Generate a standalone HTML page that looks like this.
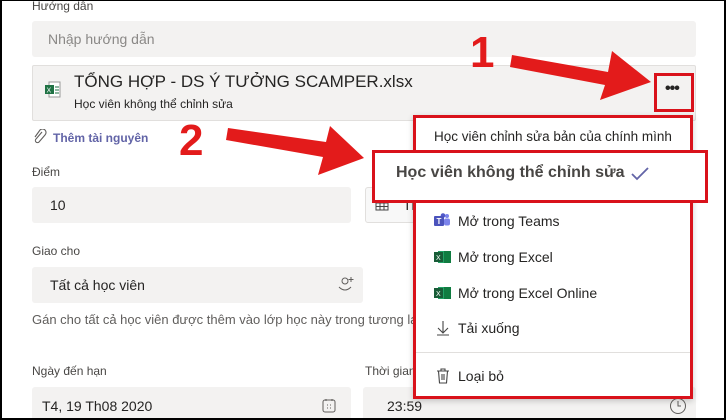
<!DOCTYPE html>
<html><head><meta charset="utf-8"><style>
*{box-sizing:border-box;margin:0;padding:0}
html,body{width:726px;height:420px;overflow:hidden}
body{background:#fff;font-family:"Liberation Sans","Noto Sans CJK SC",sans-serif;color:#252423;position:relative}
.frame{position:absolute;left:0;top:0;width:726px;height:420px;border:2px solid #000;border-top:1px solid #000;z-index:50;pointer-events:none}
.a{position:absolute;white-space:nowrap}
.lbl{font-size:12px;color:#484644}
.box{position:absolute;background:#f3f2f1;border-radius:3px}
.mi{position:absolute;left:458px;font-size:14px;color:#252423;white-space:nowrap}
</style></head><body>
<div class="frame"></div>
<div class="a lbl" style="left:32px;top:-1px">Hướng dẫn</div>
<div class="box" style="left:32px;top:21px;width:664px;height:36px"></div>
<div class="a" style="left:48px;top:31px;font-size:14px;color:#8a8886">Nhập hướng dẫn</div>

<div class="box" style="left:32px;top:65px;width:664px;height:56px;border:1px solid #e1dfdd;border-radius:2px"></div>
<svg class="a" style="left:44px;top:81px" width="17" height="17" viewBox="0 0 17 17"><rect x="5" y="1" width="11" height="15" fill="#fff" stroke="#999"/><rect x="1" y="4" width="9" height="9" fill="#1f7244"/><text x="2.5" y="11.5" font-size="7" fill="#fff" font-family="Liberation Sans">X</text><path d="M11 6h4M11 9h4M11 12h4" stroke="#1f7244"/></svg>
<div class="a" style="left:74px;top:72px;font-size:17px;color:#252423">TỔNG HỢP - DS Ý TƯỞNG SCAMPER.xlsx</div>
<div class="a" style="left:74px;top:97px;font-size:12px;color:#252423">Học viên không thể chỉnh sửa</div>

<div class="a" style="left:654px;top:73px;width:40px;height:39px;border:3px solid #d9121b"></div>
<div class="a" style="left:665px;top:80px;font-size:16px;font-weight:bold;letter-spacing:-1px">•••</div>

<svg class="a" style="left:33px;top:129px" width="14" height="16" viewBox="0 0 14 16"><path d="M9 3L3 10a2 2 0 0 0 3 3l6-7a3.5 3.5 0 0 0-5-5L2 8" fill="none" stroke="#605e5c" stroke-width="1.1"/></svg>
<div class="a" style="left:53px;top:131px;font-size:12px;font-weight:bold;color:#6264a7">Thêm tài nguyên</div>

<div class="a" style="left:179px;top:116px;font-size:44px;font-weight:bold;color:#e31b1b">2</div>
<div class="a" style="left:470px;top:28px;font-size:44px;font-weight:bold;color:#e31b1b">1</div>
<svg class="a" style="left:0;top:0" width="726" height="420">
<path d="M228 128L326 142L330 126L364 158L318 175L323 157L226 140Z" fill="#e31b1b"/>
<path d="M512 55L608 72L612 51L651 82L600 100L605 85L510 67Z" fill="#e31b1b"/>
</svg>

<div class="a lbl" style="left:32px;top:165px">Điểm</div>
<div class="box" style="left:32px;top:187px;width:319px;height:36px"></div>
<div class="a" style="left:50px;top:197px;font-size:14px">10</div>
<div class="box" style="left:365px;top:187px;width:60px;height:36px;border:1px solid #e1dfdd;background:#f8f8f8"></div>
<svg class="a" style="left:375px;top:199px" width="14" height="12"><path d="M1 1h12v10H1zM1 4h12M1 7.5h12M5 1v10M9 1v10" fill="none" stroke="#444"/></svg>
<div class="a" style="left:403px;top:197px;font-size:14px">Th</div>

<div class="a lbl" style="left:32px;top:244px">Giao cho</div>
<div class="box" style="left:32px;top:267px;width:331px;height:36px"></div>
<div class="a" style="left:50px;top:277px;font-size:14px">Tất cả học viên</div>
<svg class="a" style="left:337px;top:276px" width="18" height="16"><circle cx="8" cy="5" r="3" fill="none" stroke="#605e5c"/><path d="M2 11q6 6 12 0" fill="none" stroke="#605e5c"/><path d="M14 1v5M11.5 3.5h5" stroke="#605e5c"/></svg>
<div class="a" style="left:32px;top:312px;font-size:13px;color:#605e5c">Gán cho tất cả học viên được thêm vào lớp học này trong tương lai</div>

<div class="a lbl" style="left:32px;top:364px">Ngày đến hạn</div>
<div class="box" style="left:32px;top:387px;width:319px;height:40px"></div>
<div class="a" style="left:42px;top:398px;font-size:14px">T4, 19 Th08 2020</div>
<svg class="a" style="left:322px;top:398px" width="14" height="15"><rect x="1" y="2" width="12" height="12" rx="2" fill="none" stroke="#605e5c"/><path d="M4 1v2M10 1v2M5 7h1M8 7h1M5 10h1M8 10h1" stroke="#605e5c"/></svg>
<div class="a lbl" style="left:365px;top:364px">Thời gian</div>
<div class="box" style="left:363px;top:387px;width:333px;height:40px"></div>
<div class="a" style="left:387px;top:398px;font-size:14px">23:59</div>
<svg class="a" style="left:669px;top:397px" width="18" height="18"><circle cx="9" cy="9" r="7.5" fill="none" stroke="#605e5c"/><path d="M9 4v5h3" fill="none" stroke="#605e5c"/></svg>

<div class="a" style="left:413px;top:115px;width:280px;height:284px;background:#fff;border:3px solid #d9121b;box-shadow:0 2px 6px rgba(0,0,0,.2)"></div>
<div class="mi" style="left:434px;top:129px;font-size:13.5px">Học viên chỉnh sửa bản của chính mình</div>
<div class="a" style="left:372px;top:150px;width:336px;height:53px;background:#fff;border:3px solid #d9121b"></div>
<div class="a" style="left:396px;top:164px;font-size:16px;font-weight:bold;color:#484644">Học viên không thể chỉnh sửa</div>
<svg class="a" style="left:631px;top:167px" width="18" height="14"><path d="M1 7l5 5L17 1" fill="none" stroke="#6264a7" stroke-width="1.8"/></svg>

<svg class="a" style="left:434px;top:213px" width="17" height="14"><circle cx="13" cy="3" r="2" fill="#7b83eb"/><rect x="10" y="5.5" width="6" height="7" rx="2" fill="#7b83eb"/><circle cx="9" cy="2.5" r="2.3" fill="#5059c9"/><rect x="0" y="3" width="10" height="10" rx="1" fill="#4b53bc"/><text x="2.5" y="11" font-size="8" fill="#fff" font-family="Liberation Sans" font-weight="bold">T</text></svg>
<div class="mi" style="top:213px">Mở trong Teams</div>
<svg class="a" style="left:434px;top:250px" width="17" height="14"><rect x="4" y="1" width="13" height="12" fill="#21a366"/><rect x="10" y="1" width="7" height="12" fill="#107c41"/><rect x="0" y="2" width="9" height="10" fill="#185c37"/><text x="2" y="10" font-size="7" fill="#fff" font-family="Liberation Sans">X</text></svg>
<div class="mi" style="top:249px">Mở trong Excel</div>
<svg class="a" style="left:434px;top:286px" width="17" height="14"><rect x="4" y="1" width="13" height="12" fill="#21a366"/><rect x="10" y="1" width="7" height="12" fill="#107c41"/><rect x="0" y="2" width="9" height="10" fill="#185c37"/><text x="2" y="10" font-size="7" fill="#fff" font-family="Liberation Sans">X</text></svg>
<div class="mi" style="top:285px">Mở trong Excel Online</div>
<svg class="a" style="left:436px;top:320px" width="14" height="16"><path d="M7 1v12M2 8l5 5 5-5M1 15h12" fill="none" stroke="#444" stroke-width="1.1"/></svg>
<div class="mi" style="top:320px">Tải xuống</div>
<div class="a" style="left:416px;top:352px;width:274px;height:1px;background:#e1dfdd"></div>
<svg class="a" style="left:436px;top:368px" width="14" height="16"><path d="M1 3h12M5 3V1h4v2M2.5 3l1 12h7l1-12M6 6v6M8 6v6" fill="none" stroke="#444" stroke-width="1.1"/></svg>
<div class="mi" style="top:368px">Loại bỏ</div>
</body></html>
